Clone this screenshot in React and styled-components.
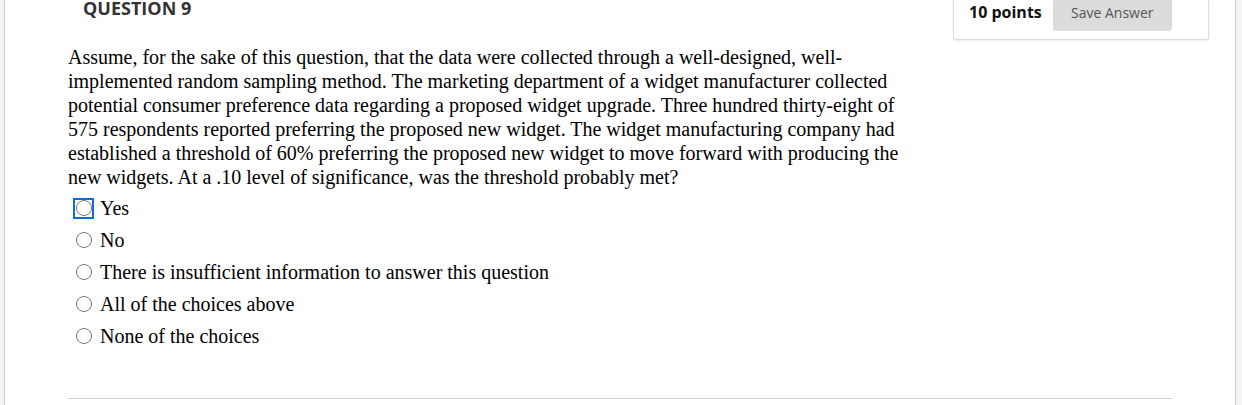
import React from "react"
import styled, { createGlobalStyle } from "styled-components"

const GlobalStyle = createGlobalStyle`
  html, body {
    margin: 0;
    padding: 0;
    background: #f4f4f4;
  }
  body {
    width: 1242px;
    height: 405px;
    overflow: hidden;
  }
`

const Card = styled.div`
  margin: 0 6px 0 4px;
  height: 405px;
  box-sizing: border-box;
  background: #fff;
  border-left: 1px solid #cfcfcf;
  border-right: 1px solid #cfcfcf;
  display: flex;
  flex-direction: column;
`

const Header = styled.div`
  display: flex;
  justify-content: space-between;
  align-items: flex-start;
  height: 41px;
`

const Title = styled.h2`
  margin: -4px 0 0 78px;
  font-family: "Open Sans", sans-serif;
  font-weight: 700;
  font-size: 18px;
  line-height: 24px;
  color: #333;
`

const PointsBox = styled.div`
  display: flex;
  align-items: flex-start;
  margin-right: 26px;
  width: 256px;
  height: 40px;
  box-sizing: border-box;
  padding-left: 15px;
  background: #fff;
  border: 1px solid #dcdcdc;
  border-top: none;
  border-radius: 0 0 3px 3px;
  box-shadow: 0 1px 2px rgba(0, 0, 0, 0.08);
`

const Points = styled.span`
  font-family: "Open Sans", sans-serif;
  font-weight: 700;
  font-size: 16px;
  line-height: 24px;
  color: #111;
  margin-right: 11px;
`

const SaveButton = styled.button`
  width: 119px;
  height: 31px;
  border: none;
  border-radius: 0 0 3px 3px;
  background: #dcdcdc;
  font-family: "Open Sans", sans-serif;
  font-size: 14px;
  color: #555;
  padding: 0 0 6px;
`

const Body = styled.div`
  margin: 4px 0 0 63px;
  width: 840px;
  font-family: "Liberation Serif", "Times New Roman", serif;
  font-size: 20px;
  line-height: 24px;
  color: #000;
`

const Question = styled.p`
  margin: 0 0 3px;
`

const Options = styled.ul`
  list-style: none;
  margin: 0;
  padding: 0;
`

const Option = styled.li`
  display: flex;
  align-items: center;
  height: 32px;
`

const RadioWrap = styled.span`
  display: flex;
  align-items: center;
  justify-content: center;
  width: 21px;
  height: 21px;
  margin: 0 6px 0 5px;
  box-sizing: border-box;
  border: 2px solid ${p => (p.focused ? "#0a6fd6" : "transparent")};
`

const Radio = styled.span`
  width: 16px;
  height: 16px;
  box-sizing: border-box;
  border-radius: 50%;
  border: 1.5px solid #767676;
  background: #fff;
`

const Footer = styled.div`
  margin: auto 63px 6px 63px;
  border-top: 1px solid #cfcfcf;
  width: 1104px;
`

const choices = [
  "Yes",
  "No",
  "There is insufficient information to answer this question",
  "All of the choices above",
  "None of the choices",
]

const App = () => {
  return (
    <>
      <GlobalStyle />
      <Card>
        <Header>
          <Title>QUESTION 9</Title>
          <PointsBox>
            <Points>10 points</Points>
            <SaveButton>Save Answer</SaveButton>
          </PointsBox>
        </Header>
        <Body>
          <Question>
            Assume, for the sake of this question, that the data were collected through a well-designed, well-implemented
            random sampling method. The marketing department of a widget manufacturer collected potential consumer
            preference data regarding a proposed widget upgrade. Three hundred thirty-eight of 575 respondents reported
            preferring the proposed new widget. The widget manufacturing company had established a threshold of 60%
            preferring the proposed new widget to move forward with producing the new widgets. At a .10 level of
            significance, was the threshold probably met?
          </Question>
          <Options>
            {choices.map((c, i) => (
              <Option key={c}>
                <RadioWrap focused={i === 0}>
                  <Radio />
                </RadioWrap>
                {c}
              </Option>
            ))}
          </Options>
        </Body>
        <Footer />
      </Card>
    </>
  )
}

export default App
